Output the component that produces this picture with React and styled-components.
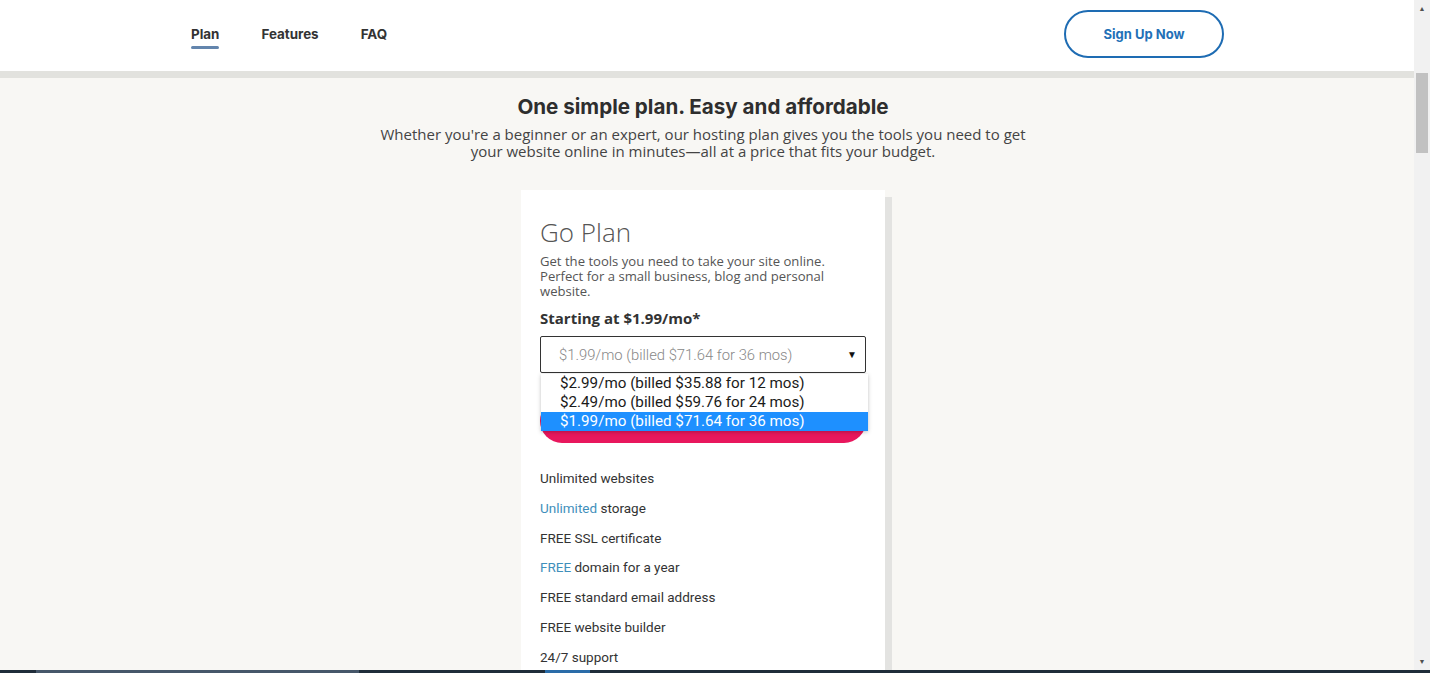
import styled, { createGlobalStyle } from 'styled-components';

const GlobalStyle = createGlobalStyle`
  html, body {
    margin: 0;
    padding: 0;
    overflow: hidden;
  }
  * {
    box-sizing: border-box;
  }
`;

const Screen = styled.div`
  height: 673px;
  display: flex;
  flex-direction: column;
`;

const Viewport = styled.div`
  flex: 1;
  display: flex;
  min-height: 0;
`;

const Page = styled.div`
  flex: 1;
  overflow: hidden;
  background: #f8f7f4;
  font-family: Roboto, "Liberation Sans", sans-serif;
  color: #333;
`;

const Header = styled.header`
  height: 71px;
  background: #fff;
  border-bottom: 7px solid #e2e2de;
  box-sizing: content-box;
`;

const HeaderInner = styled.div`
  width: 1034px;
  height: 100%;
  margin: 0 auto;
  display: flex;
  align-items: center;
  justify-content: space-between;
  padding-bottom: 4px;
`;

const Nav = styled.nav`
  display: flex;
  gap: 42px;
  margin-left: 1px;
`;

const NavLink = styled.a`
  position: relative;
  font-family: Inter, Roboto, sans-serif;
  font-size: 13.4px;
  font-weight: 700;
  color: #333;
  text-decoration: none;
  line-height: 16px;

  &::after {
    content: '';
    display: ${p => (p.$active ? 'block' : 'none')};
    position: absolute;
    left: 0;
    right: 0;
    bottom: -7px;
    height: 3px;
    border-radius: 2px;
    background: #6385ad;
  }
`;

const OutlineButton = styled.button`
  width: 160px;
  height: 48px;
  border: 2px solid #1e6cb3;
  border-radius: 24px;
  background: #fff;
  color: #2270b7;
  font-family: Inter, Roboto, sans-serif;
  font-size: 13px;
  font-weight: 700;
`;

const Main = styled.main`
  padding-right: 8px;
  display: flex;
  flex-direction: column;
  align-items: center;
`;

const Title = styled.h1`
  margin: 16px 0 0;
  font-family: Inter, Roboto, sans-serif;
  font-size: 20.6px;
  line-height: 26px;
  font-weight: 700;
  color: #2e2e2e;
`;

const Lead = styled.p`
  margin: 6px 0 0;
  width: 680px;
  text-align: center;
  font-family: "Open Sans", sans-serif;
  font-size: 15px;
  line-height: 17px;
  color: #444;
`;

const Card = styled.section`
  position: relative;
  width: 364px;
  margin-top: 30px;
  padding: 26px 19px 0;
  background: #fff;
  box-shadow: 7px 7px 0 0 #e3e3e1;
  height: 500px;
`;

const PlanName = styled.h2`
  margin: 0;
  font-family: "Open Sans", sans-serif;
  font-weight: 300;
  font-size: 26px;
  line-height: 32px;
  color: #555;
`;

const PlanText = styled.p`
  margin: 6px 0 0;
  font-family: "Open Sans", sans-serif;
  font-size: 13.1px;
  line-height: 15px;
  color: #555;
`;

const Starting = styled.p`
  margin: 9px 0 0;
  font-family: "Open Sans", sans-serif;
  font-size: 15px;
  font-weight: 700;
  line-height: 20px;
  color: #333;
`;

const SelectBox = styled.div`
  margin-top: 8px;
  height: 37px;
  border: 1px solid #333;
  border-radius: 2px;
  display: flex;
  align-items: center;
  justify-content: space-between;
  padding: 0 8px 0 18px;
  font-size: 14.8px;
  font-weight: 300;
  color: #888;
`;

const Caret = styled.span`
  font-size: 10px;
  color: #111;
`;

const Dropdown = styled.ul`
  position: absolute;
  left: 20px;
  top: 184px;
  width: 327px;
  margin: 0;
  padding: 0;
  list-style: none;
  background: #fff;
  box-shadow: 0 1px 4px rgba(0, 0, 0, 0.25);
  z-index: 2;
`;

const Option = styled.li`
  height: 19px;
  line-height: 19px;
  padding-left: 19px;
  font-size: 15.2px;
  color: ${p => (p.$selected ? '#fff' : '#1a1a1a')};
  background: ${p => (p.$selected ? '#1e90ff' : 'transparent')};
`;

const CtaButton = styled.button`
  display: block;
  width: 100%;
  height: 44px;
  margin-top: 26px;
  border: 0;
  border-radius: 22px;
  background: #e8175d;
  color: #fff;
  font-family: Roboto, "Liberation Sans", sans-serif;
  font-size: 14px;
  font-weight: 700;
`;

const Features = styled.ul`
  margin: 21px 0 0;
  padding: 0;
  list-style: none;
`;

const Feature = styled.li`
  font-size: 13.5px;
  line-height: 29.8px;
  color: #333;
`;

const Accent = styled.span`
  color: #3f8fbb;
`;

const Scrollbar = styled.div`
  width: 16px;
  background: #f1f1f1;
  display: flex;
  flex-direction: column;
  align-items: center;
`;

const Arrow = styled.div`
  height: 17px;
  display: flex;
  align-items: center;
  justify-content: center;
  font-size: 7px;
  color: #505050;
`;

const Track = styled.div`
  flex: 1;
  width: 100%;
  padding: 56px 2px 0;
`;

const Thumb = styled.div`
  height: 80px;
  background: #c1c1c1;
`;

const Taskbar = styled.div`
  height: 3px;
  background: #1f2d3a;
  display: flex;
`;

const TaskSeg = styled.div`
  height: 100%;
  margin-left: ${p => p.$gap}px;
  width: ${p => p.$w}px;
  background: ${p => p.$c};
`;

const plans = [
  '$2.99/mo (billed $35.88 for 12 mos)',
  '$2.49/mo (billed $59.76 for 24 mos)',
  '$1.99/mo (billed $71.64 for 36 mos)',
];

const featureList = [
  [null, 'Unlimited websites'],
  ['Unlimited', ' storage'],
  [null, 'FREE SSL certificate'],
  ['FREE', ' domain for a year'],
  [null, 'FREE standard email address'],
  [null, 'FREE website builder'],
  [null, '24/7 support'],
];

const App = () => {
  return (
    <Screen>
      <GlobalStyle />
      <Viewport>
        <Page>
          <Header>
            <HeaderInner>
              <Nav>
                <NavLink href="#" $active>Plan</NavLink>
                <NavLink href="#">Features</NavLink>
                <NavLink href="#">FAQ</NavLink>
              </Nav>
              <OutlineButton>Sign Up Now</OutlineButton>
            </HeaderInner>
          </Header>

          <Main>
            <Title>One simple plan. Easy and affordable</Title>
            <Lead>
              Whether you're a beginner or an expert, our hosting plan gives you the tools you need to get
              your website online in minutes—all at a price that fits your budget.
            </Lead>

            <Card>
              <PlanName>Go Plan</PlanName>
              <PlanText>
                Get the tools you need to take your site online. Perfect for a small business, blog and personal website.
              </PlanText>
              <Starting>Starting at $1.99/mo*</Starting>
              <SelectBox>
                <span>{plans[2]}</span>
                <Caret>▼</Caret>
              </SelectBox>
              <Dropdown>
                {plans.map((plan, i) => (
                  <Option key={i} $selected={i === 2}>{plan}</Option>
                ))}
              </Dropdown>
              <CtaButton>Sign Up Now</CtaButton>
              <Features>
                {featureList.map(([accent, rest], i) => (
                  <Feature key={i}>
                    {accent && <Accent>{accent}</Accent>}
                    {rest}
                  </Feature>
                ))}
              </Features>
            </Card>
          </Main>
        </Page>

        <Scrollbar>
          <Arrow>▲</Arrow>
          <Track>
            <Thumb />
          </Track>
          <Arrow>▼</Arrow>
        </Scrollbar>
      </Viewport>
      <Taskbar>
        <TaskSeg $gap={36} $w={323} $c="#46576a" />
        <TaskSeg $gap={186} $w={45} $c="#2a6ca8" />
      </Taskbar>
    </Screen>
  );
};

export default App;
